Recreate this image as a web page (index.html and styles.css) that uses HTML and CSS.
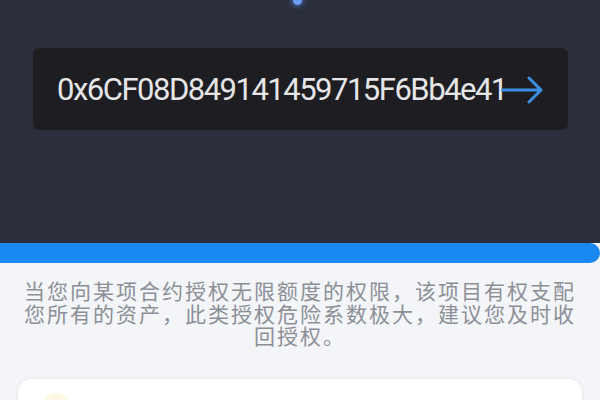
FILE: index.html
```html
<!DOCTYPE html>
<html>
<head>
<meta charset="utf-8">
<link rel="stylesheet" href="styles.css">
</head>
<body>
<div class="page">
  <div class="top">
    <span class="dot"></span>
    <div class="addr">
      <span class="hex">0x6CF08D849141459715F6Bb4e41</span>
      <svg class="arrow" width="44" height="32" viewBox="0 0 44 32"><path d="M1 16 H40 M28 4 L40 16 L28 28" fill="none" stroke="#3b8fe3" stroke-width="3" stroke-linecap="round" stroke-linejoin="round"/></svg>
    </div>
  </div>
  <div class="bar"></div>
  <div class="content">
    <p class="desc">当您向某项合约授权无限额度的权限，该项目有权支配您所有的资产，此类授权危险系数极大，建议您及时收回授权。</p>
    <div class="card"><span class="badge"></span></div>
  </div>
</div>
</body>
</html>
```
FILE: styles.css
```css
html, body { margin: 0; padding: 0; }
body { width: 600px; height: 400px; overflow: hidden; background: #f3f5f9; font-family: Roboto, "Noto Sans CJK SC", sans-serif; }
.page { width: 600px; height: 400px; display: flex; flex-direction: column; overflow: hidden; }
.top { position: relative; flex-shrink: 0; height: 243px; box-sizing: border-box; background: #2b2f3b; padding: 48px 32px 0 33px; }
.dot { position: absolute; left: 293px; top: -4px; width: 9px; height: 9px; border-radius: 50%; background: #6e9cf0; box-shadow: 0 0 4px 2px rgba(90,130,230,0.5); }
.addr { height: 82px; background: #1e1e22; border-radius: 6px; display: flex; align-items: center; padding-left: 24px; }
.hex { color: #e6e6e8; font-size: 31px; letter-spacing: -1.5px; line-height: 1; }
.arrow { margin-left: -6px; margin-top: 2px; }
.bar { flex-shrink: 0; height: 20px; background: #1a88f1; border-radius: 0 10px 10px 0; }
.content { flex: 1; min-height: 0; }
.desc { margin: 16px 24px 0 24px; color: #8c8f96; font-family: "Noto Sans CJK SC", sans-serif; font-size: 21px; letter-spacing: 2px; line-height: 22.5px; text-align: center; }
.card { position: relative; overflow: hidden; margin: 32px 18px 0 18px; height: 22px; background: #ffffff; border-radius: 14px 14px 0 0; box-shadow: 0 0 4px rgba(200,205,215,0.4); }
.badge { position: absolute; left: 24px; top: 14px; width: 28px; height: 28px; border-radius: 50%; background: #fdf7e4; }
```
